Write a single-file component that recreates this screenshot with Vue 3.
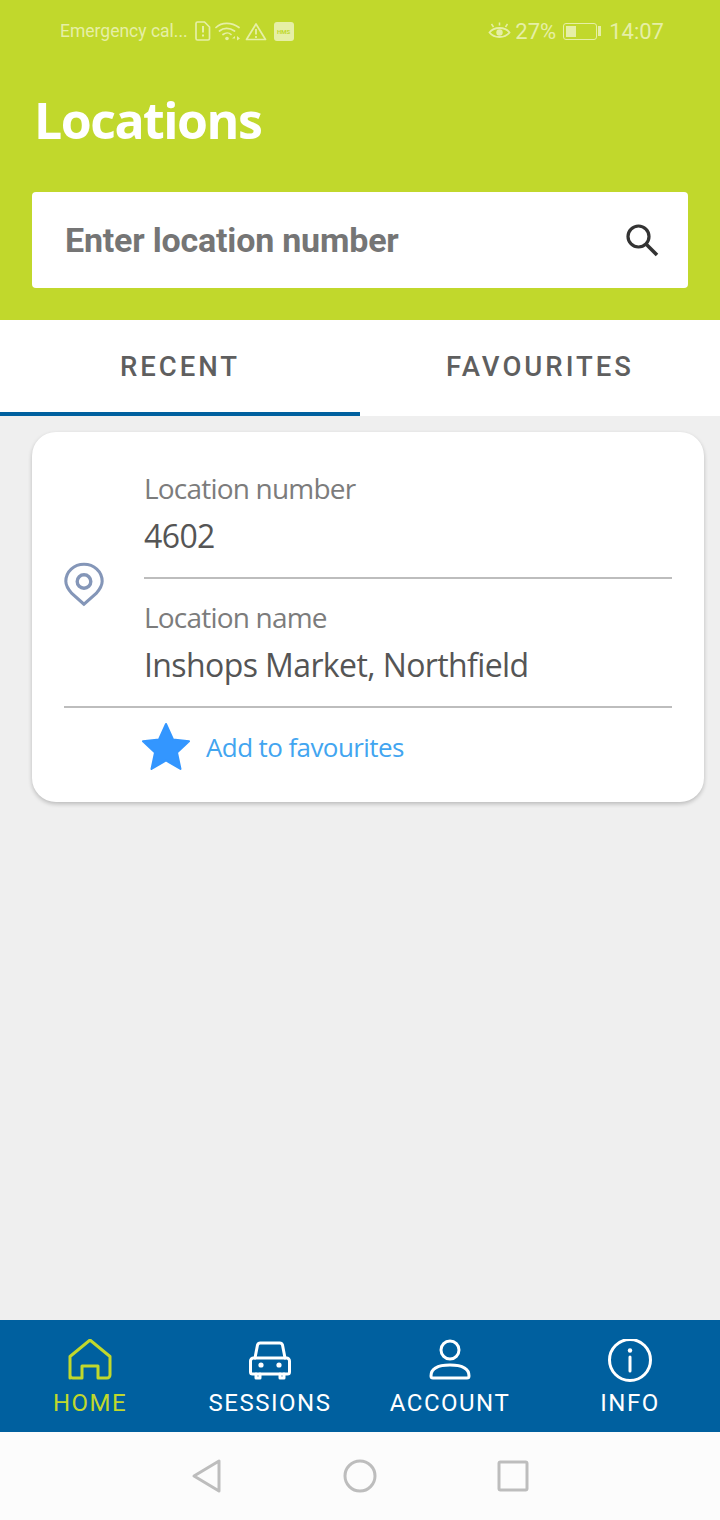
<template>
  <div class="screen">
    <header class="top">
      <div class="status">
        <div class="status-left">
          <span class="carrier">Emergency cal...</span>
          <svg class="ic" width="16" height="20" viewBox="0 0 16 20" fill="none" stroke="currentColor" stroke-width="1.7">
            <path d="M2.5 1h7l5 5v11.5a1.5 1.5 0 0 1-1.5 1.500H2.500A1.500 1.500 0 0 1 1 17.500V2.500A1.500 1.500 0 0 1 2.500 1z" />
            <path d="M8 5v6.500M8 13.500v2" stroke-width="2" />
          </svg>
          <svg class="ic" width="26" height="20" viewBox="0 0 26 20" fill="none" stroke="currentColor" stroke-width="1.7" stroke-linecap="round">
            <path d="M1 6.500C6.500 1 16.500 1 24 6.500M4.500 10c4-3.500 10-3.500 15 0M8 13.500c2.500-2 6-2 8 0" />
            <circle cx="12" cy="17.500" r="1.800" fill="currentColor" stroke="none" />
            <path d="M20 15l-3 2.500h3zM22 15l3 2.500-3 2z" fill="currentColor" stroke="none" />
          </svg>
          <svg class="ic" width="22" height="19" viewBox="0 0 22 19" fill="none" stroke="currentColor" stroke-width="1.700" stroke-linejoin="round">
            <path d="M11 2l9.500 15.500h-19z" />
            <path d="M11 7v5.500M11 14v2" stroke-width="1.800" />
          </svg>
          <span class="hms">HMS</span>
        </div>
        <div class="status-right">
          <svg class="ic" width="23" height="18" viewBox="0 0 23 18" fill="none" stroke="currentColor" stroke-width="1.800">
            <path d="M1.500 10.500C6 4.500 17 4.500 21.500 10.500 17 16.500 6 16.500 1.500 10.500z" />
            <circle cx="11.500" cy="10.500" r="3.200" fill="currentColor" stroke="none" />
            <path d="M3.500 2l2 3M11.500 0.500v3M19.500 2l-2 3" stroke-width="1.500" />
          </svg>
          <span class="pct">27%</span>
          <span class="battery"><i class="battery-fill"></i></span>
          <i class="battery-tip"></i>
          <span class="clock">14:07</span>
        </div>
      </div>
      <h1 class="title">Locations</h1>
      <div class="search">
        <span class="search-text">Enter location number</span>
        <svg width="38" height="38" viewBox="0 0 38 38" fill="none" stroke="#333" stroke-width="3.200">
          <circle cx="16.500" cy="15.500" r="10.500" />
          <path d="M24 23l11 11" stroke-width="3.600" />
        </svg>
      </div>
    </header>

    <nav class="tabs">
      <div class="tab active">RECENT</div>
      <div class="tab">FAVOURITES</div>
    </nav>

    <main class="content">
      <section class="card">
        <div class="card-main">
          <div class="pin">
            <svg width="44" height="50" viewBox="0 0 44 50" fill="none" stroke="#8496b8" stroke-width="3.400">
              <path d="M22 47.500 8.500 35.500C3.500 30 1.800 27 1.800 22 1.800 11 11 3 22 3s20.200 8 20.200 19c0 5-1.700 8-6.700 13.500z" transform="translate(2.200 1.500) scale(.9)" />
              <circle cx="22" cy="21.500" r="6.800" />
            </svg>
          </div>
          <div class="fields">
            <div class="field">
              <div class="field-label">Location number</div>
              <div class="field-value">4602</div>
            </div>
            <div class="field last">
              <div class="field-label">Location name</div>
              <div class="field-value">Inshops Market, Northfield</div>
            </div>
          </div>
        </div>
        <div class="fav">
          <svg width="48" height="50" viewBox="0 0 48 50" fill="#3396ff" stroke="#3396ff" stroke-width="2" stroke-linejoin="round">
            <path d="M24 2l7 15.500 16 1.800-12 11.200 3.500 16.500L24 38.500 9.500 47 13 30.500 1 19.300l16-1.800z" />
          </svg>
          <span class="fav-text">Add to favourites</span>
        </div>
      </section>
    </main>

    <footer class="bottom">
      <div v-for="item in navItems" :key="item.label" class="nav-item" :class="{ current: item.current }">
        <svg width="44" height="44" viewBox="0 0 44 44" fill="none" stroke="currentColor" stroke-width="3" stroke-linecap="round" stroke-linejoin="round">
          <path v-for="(d, i) in item.paths" :key="i" :d="d" />
          <circle v-for="(c, i) in item.circles" :key="i" :cx="c[0]" :cy="c[1]" :r="c[2]" :fill="c[3] ? 'currentColor' : 'none'" :stroke="c[3] ? 'none' : 'currentColor'" />
        </svg>
        <span class="nav-label">{{ item.label }}</span>
      </div>
    </footer>

    <div class="softkeys">
      <svg width="32" height="36" viewBox="0 0 32 36" fill="none" stroke="#bdbdbd" stroke-width="3" stroke-linejoin="round">
        <path d="M28 3v30L3 18z" />
      </svg>
      <svg width="34" height="34" viewBox="0 0 34 34" fill="none" stroke="#bdbdbd" stroke-width="3">
        <circle cx="17" cy="17" r="15" />
      </svg>
      <svg width="32" height="32" viewBox="0 0 32 32" fill="none" stroke="#bdbdbd" stroke-width="3" stroke-linejoin="round">
        <rect x="2" y="2" width="28" height="28" rx="1.500" />
      </svg>
    </div>
  </div>
</template>

<script setup>
const navItems = [
  {
    label: 'HOME',
    current: true,
    paths: ['M2 39V17.500L22 1 42 17.500V36a3 3 0 0 1-3 3H30V27H14V39H5a3 3 0 0 1-3-3z'],
    circles: []
  },
  {
    label: 'SESSIONS',
    paths: [
      'M7 19l2.500-13a3 3 0 0 1 3-2h19a3 3 0 0 1 3 2L37 19',
      'M5.500 19h33a3 3 0 0 1 3 3v11a2 2 0 0 1-2 2h-35a2 2 0 0 1-2-2V22a3 3 0 0 1 3-3z',
      'M8 35v4h4v-4M32 35v4h4v-4'
    ],
    circles: [[13, 26, 2.600, true], [31, 26, 2.600, true]]
  },
  {
    label: 'ACCOUNT',
    paths: ['M3 37c0-9 9-11 19-11s19 2 19 11c0 1.200-.8 2-2 2H5c-1.200 0-2-.8-2-2z'],
    circles: [[22, 11, 9, false]]
  },
  {
    label: 'INFO',
    paths: ['M22 18v14'],
    circles: [[22, 21, 20.500, false], [22, 11.500, 2.200, true]]
  }
]
</script>

<style>
html, body {
  margin: 0;
  background: #efefef;
}
</style>

<style scoped>
.screen {
  width: 720px;
  height: 1520px;
  display: flex;
  flex-direction: column;
  background: #efefef;
  font-family: Roboto, sans-serif;
  overflow: hidden;
}
.top {
  height: 320px;
  box-sizing: border-box;
  background: #c1d82c;
  padding: 0 32px;
  display: flex;
  flex-direction: column;
}
.status {
  height: 62px;
  margin: 0 24px 0 28px;
  display: flex;
  justify-content: space-between;
  align-items: center;
  color: #e6efa6;
  font-size: 18px;
}
.status-left, .status-right {
  display: flex;
  align-items: center;
}
.carrier {
  margin-right: 7px;
  font-size: 17.500px;
}
.ic {
  margin-right: 4px;
  display: block;
}
.hms {
  width: 20px;
  height: 19px;
  margin-left: 3px;
  border-radius: 3px;
  background: #e6efa6;
  color: #c1d82c;
  font-size: 6px;
  font-weight: 700;
  line-height: 19px;
  text-align: center;
}
.pct {
  font-size: 22px;
  margin-right: 7px;
}
.battery {
  width: 34px;
  height: 17px;
  box-sizing: border-box;
  border: 1px solid #e6efa6;
  border-radius: 3px;
  padding: 2px;
  display: block;
}
.battery-fill {
  display: block;
  width: 10px;
  height: 100%;
  background: #e6efa6;
}
.battery-tip {
  width: 3px;
  height: 10px;
  margin-left: 1px;
  background: #e6efa6;
}
.clock {
  font-size: 22px;
  margin-left: 8px;
}
.title {
  margin: 20px 0 0 2px;
  font-family: "Open Sans", sans-serif;
  font-size: 50px;
  line-height: 76px;
  font-weight: 700;
  color: #fff;
  letter-spacing: -1.500px;
}
.search {
  margin-top: 34px;
  height: 96px;
  flex: none;
  background: #fff;
  border-radius: 4px;
  display: flex;
  align-items: center;
  justify-content: space-between;
  padding: 0 28px 0 33px;
}
.search-text {
  font-size: 34px;
  font-weight: 700;
  color: #757575;
  letter-spacing: -0.200px;
}
.tabs {
  height: 96px;
  flex: none;
  display: flex;
  background: #fff;
}
.tab {
  flex: 1;
  box-sizing: border-box;
  display: flex;
  align-items: center;
  justify-content: center;
  font-size: 27.500px;
  font-weight: 500;
  letter-spacing: 3px;
  color: #5f5f5f;
  padding-bottom: 4px;
}
.tab.active {
  border-bottom: 4px solid #00609f;
  padding-bottom: 0;
}
.content {
  flex: 1;
  padding: 16px 16px 0 32px;
}
.card {
  height: 370px;
  box-sizing: border-box;
  background: #fff;
  border-radius: 24px;
  box-shadow: 0 2px 4px rgba(0, 0, 0, 0.22);
  padding: 32px 32px 0;
}
.card-main {
  display: flex;
  align-items: center;
  border-bottom: 2px solid #bdbdbd;
}
.pin {
  width: 80px;
  flex: none;
  margin-left: -2px;
  margin-right: 2px;
}
.pin svg {
  display: block;
}
.fields {
  flex: 1;
}
.field {
  height: 113px;
  border-bottom: 2px solid #bdbdbd;
  margin-bottom: 14px;
}
.field.last {
  border-bottom: 0;
  margin-bottom: 0;
  height: 113px;
}
.field-label {
  font-family: "Open Sans", sans-serif;
  font-size: 28px;
  line-height: 48px;
  color: #7c7c7c;
  letter-spacing: -0.800px;
}
.field-value {
  font-family: "Open Sans", sans-serif;
  font-size: 32px;
  line-height: 48px;
  color: #555;
  letter-spacing: -0.600px;
}
.fav {
  display: flex;
  align-items: center;
  padding: 14px 0 0 78px;
}
.fav svg {
  display: block;
}
.fav-text {
  margin-left: 16px;
  font-family: "Open Sans", sans-serif;
  font-size: 26px;
  color: #42a5f0;
  letter-spacing: -0.600px;
}
.bottom {
  height: 112px;
  flex: none;
  background: #00609f;
  display: flex;
}
.nav-item {
  flex: 1;
  display: flex;
  flex-direction: column;
  align-items: center;
  color: #fff;
  padding-top: 19px;
  box-sizing: border-box;
}
.nav-item svg {
  display: block;
}
.nav-item.current {
  color: #c1d82c;
}
.nav-label {
  margin-top: 5px;
  font-size: 24px;
  line-height: 30px;
  letter-spacing: 1.500px;
}
.softkeys {
  height: 88px;
  flex: none;
  background: #fcfcfc;
  display: flex;
  align-items: center;
  justify-content: center;
  gap: 120px;
}
</style>
